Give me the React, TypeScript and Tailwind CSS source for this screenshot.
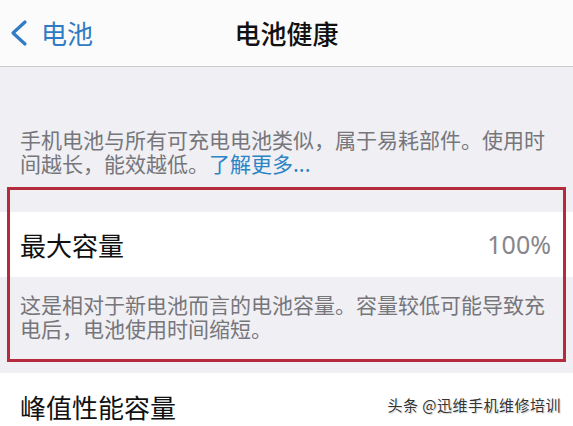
import React from "react";

const font = { fontFamily: '"Noto Sans CJK SC", "Noto Sans", sans-serif' };

export default function App() {
  return (
    <div className="w-[573px] h-[426px] overflow-hidden bg-[#efeff4] relative" style={font}>
      {/* Nav bar */}
      <div className="h-[67px] bg-[#fbfbfb] border-b border-[#c9c9ce] grid grid-cols-[1fr_auto_1fr] items-center">
        <div className="flex items-center pl-[9px] gap-[12px] text-[#2f7cc4]">
          <svg width="20" height="28" viewBox="0 0 20 28" fill="none">
            <polyline points="16,3 4,14 16,25" stroke="#2f7cc4" strokeWidth="3.2" strokeLinecap="round" strokeLinejoin="round" />
          </svg>
          <span className="text-[26px] leading-none">电池</span>
        </div>
        <div className="text-[26px] leading-none font-medium text-[#111]">电池健康</div>
        <div />
      </div>

      {/* Intro text */}
      <p className="pt-[60px] pb-[12px] pl-[20px] pr-[20px] text-[21px] leading-[24px] text-[#76767b]">
        手机电池与所有可充电电池类似，属于易耗部件。使用时间越长，能效越低。<span className="text-[#2a84c6]">了解更多...</span>
      </p>

      {/* Highlighted section */}
      <div className="relative">
        <div className="h-[25px]" />
        <div className="h-[65px] bg-white flex items-center justify-between pl-[20px] pr-[22px]">
          <span className="text-[26px] leading-none text-[#111]">最大容量</span>
          <span className="text-[25px] leading-none text-[#86868b]" style={{ fontFamily: '"Noto Sans", sans-serif' }}>100%</span>
        </div>
        <p className="pt-[15px] pb-[22px] pl-[20px] pr-[20px] text-[21px] leading-[24px] text-[#76767b]">
          这是相对于新电池而言的电池容量。容量较低可能导致充电后，电池使用时间缩短。
        </p>
        <div className="absolute left-[7px] right-[7px] top-0 bottom-0 border-[3px] border-[#b52a3c] pointer-events-none" />
      </div>

      <div className="h-[11px]" />
      <div className="h-[60px] bg-white pl-[20px] pt-[21px]">
        <span className="block text-[26px] leading-[26px] text-[#111]">峰值性能容量</span>
      </div>

      {/* Watermark */}
      <div
        className="absolute right-[12px] top-[396px] text-[15px] leading-[18px] text-[#333] tracking-[0.5px]"
        style={{ textShadow: "0 0 2px #fff, 0 0 2px #fff, 1px 1px 1px rgba(0,0,0,0.25)" }}
      >
        头条 @迅维手机维修培训
      </div>
    </div>
  );
}
